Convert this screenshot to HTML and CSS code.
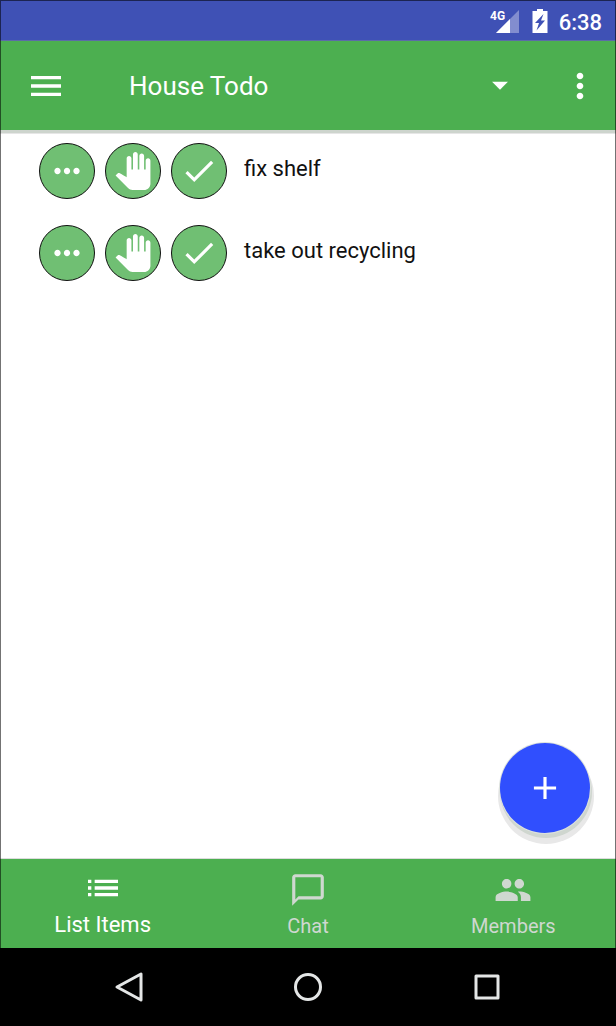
FILE: index.html
```html
<!DOCTYPE html>
<html lang="en">
<head>
<meta charset="utf-8">
<meta name="viewport" content="width=device-width, initial-scale=1">
<title>House Todo</title>
<link rel="stylesheet" href="styles.css">
</head>
<body>
<div class="device">
  <div class="status-bar">
    <svg class="status-signal" viewBox="0 0 30 24" role="img" aria-label="4G signal">
      <text class="signal-label" x="0" y="11">4G</text>
      <path d="M6 24 29 1v23z" fill="#fff" opacity=".35"/>
      <path d="M6 24 20 10v14z" fill="#fff"/>
    </svg>
    <svg class="status-battery" viewBox="0 0 16 24" role="img" aria-label="Battery charging">
      <path fill="#fff" fill-rule="evenodd" d="M5 0h6v2h4.500v22H.500V2H5zM11.500 5 3 14h4L4.500 21.500 13 11.500H9z"/>
    </svg>
    <span class="status-time">6:38</span>
  </div>

  <header class="app-bar">
    <button class="bar-button" type="button" aria-label="Open menu">
      <svg class="icon icon-large" viewBox="0 0 24 24"><path d="M3 18h18v-2H3v2zm0-5h18v-2H3v2zm0-7v2h18V6H3z"/></svg>
    </button>
    <div class="list-picker">
      <select class="list-select" aria-label="List">
        <option>House Todo</option>
      </select>
      <svg class="icon list-arrow" viewBox="0 0 24 24"><path d="m7 10 5 5 5-5z"/></svg>
    </div>
    <button class="bar-button" type="button" aria-label="More options">
      <svg class="icon icon-large" viewBox="0 0 24 24"><path d="M12 8c1.100 0 2-.9 2-2s-.9-2-2-2-2 .9-2 2 .9 2 2 2zm0 2c-1.100 0-2 .9-2 2s.9 2 2 2 2-.9 2-2-.9-2-2-2zm0 6c-1.100 0-2 .9-2 2s.9 2 2 2 2-.9 2-2-.9-2-2-2z"/></svg>
    </button>
  </header>

  <main class="content">
    <ul class="todo-list">
      <li class="todo">
        <div class="todo-actions">
          <button class="round-button" type="button" aria-label="Details of fix shelf">
            <svg class="icon" viewBox="0 0 24 24"><path d="M6 10c-1.100 0-2 .9-2 2s.9 2 2 2 2-.9 2-2-.9-2-2-2zm12 0c-1.100 0-2 .9-2 2s.9 2 2 2 2-.9 2-2-.9-2-2-2zm-6 0c-1.100 0-2 .9-2 2s.9 2 2 2 2-.9 2-2-.9-2-2-2z"/></svg>
          </button>
          <button class="round-button" type="button" aria-label="Claim fix shelf">
            <svg class="icon" viewBox="0 0 24 24"><path d="M23 5.500V20c0 2.200-1.800 4-4 4h-7.300c-1.080 0-2.100-.43-2.850-1.190L1 14.830s1.260-1.230 1.300-1.250c.22-.19.49-.29.79-.29.22 0 .42.06.6.16.04.01 4.310 2.460 4.310 2.460V4c0-.83.67-1.500 1.500-1.500S11 3.170 11 4v7h1V1.500c0-.83.67-1.500 1.500-1.500S15 .67 15 1.500V11h1V2.500c0-.83.67-1.500 1.500-1.500s1.500.67 1.500 1.500V11h1V5.500c0-.83.67-1.500 1.500-1.500s1.500.67 1.500 1.500z"/></svg>
          </button>
          <button class="round-button" type="button" aria-label="Complete fix shelf">
            <svg class="icon" viewBox="0 0 24 24"><path d="M9 16.170 4.830 12l-1.420 1.410L9 19 21 7l-1.410-1.410z"/></svg>
          </button>
        </div>
        <span class="todo-text">fix shelf</span>
      </li>
      <li class="todo">
        <div class="todo-actions">
          <button class="round-button" type="button" aria-label="Details of take out recycling">
            <svg class="icon" viewBox="0 0 24 24"><path d="M6 10c-1.100 0-2 .9-2 2s.9 2 2 2 2-.9 2-2-.9-2-2-2zm12 0c-1.100 0-2 .9-2 2s.9 2 2 2 2-.9 2-2-.9-2-2-2zm-6 0c-1.100 0-2 .9-2 2s.9 2 2 2 2-.9 2-2-.9-2-2-2z"/></svg>
          </button>
          <button class="round-button" type="button" aria-label="Claim take out recycling">
            <svg class="icon" viewBox="0 0 24 24"><path d="M23 5.500V20c0 2.200-1.800 4-4 4h-7.300c-1.080 0-2.100-.43-2.850-1.190L1 14.830s1.260-1.230 1.300-1.250c.22-.19.49-.29.79-.29.22 0 .42.06.6.16.04.01 4.310 2.460 4.310 2.460V4c0-.83.67-1.500 1.500-1.500S11 3.170 11 4v7h1V1.500c0-.83.67-1.500 1.500-1.500S15 .67 15 1.500V11h1V2.500c0-.83.67-1.500 1.500-1.500s1.500.67 1.500 1.500V11h1V5.500c0-.83.67-1.500 1.500-1.500s1.500.67 1.500 1.500z"/></svg>
          </button>
          <button class="round-button" type="button" aria-label="Complete take out recycling">
            <svg class="icon" viewBox="0 0 24 24"><path d="M9 16.170 4.830 12l-1.420 1.410L9 19 21 7l-1.410-1.410z"/></svg>
          </button>
        </div>
        <span class="todo-text">take out recycling</span>
      </li>
    </ul>
    <button class="fab" type="button" aria-label="Add item">
      <svg class="icon" viewBox="0 0 24 24"><path d="M19 13h-6v6h-2v-6H5v-2h6V5h2v6h6v2z"/></svg>
    </button>
  </main>

  <nav class="tabs" aria-label="Sections">
    <a class="tab tab-active" href="#items" aria-current="page">
      <svg class="icon icon-large" viewBox="0 0 24 24"><path d="M3 13h2v-2H3v2zm0 4h2v-2H3v2zm0-8h2V7H3v2zm4 4h14v-2H7v2zm0 4h14v-2H7v2zM7 7v2h14V7H7z"/></svg>
      <span>List Items</span>
    </a>
    <a class="tab" href="#chat">
      <svg class="icon" viewBox="0 0 24 24"><path d="M20 2H4c-1.100 0-2 .9-2 2v18l4-4h14c1.100 0 2-.9 2-2V4c0-1.100-.9-2-2-2zm0 14H6l-2 2V4h16v12z"/></svg>
      <span>Chat</span>
    </a>
    <a class="tab" href="#members">
      <svg class="icon" viewBox="0 0 24 24"><path d="M16 11c1.660 0 2.990-1.340 2.990-3S17.660 5 16 5c-1.660 0-3 1.340-3 3s1.340 3 3 3zm-8 0c1.660 0 2.990-1.340 2.990-3S9.660 5 8 5C6.340 5 5 6.340 5 8s1.340 3 3 3zm0 2c-2.330 0-7 1.170-7 3.500V19h14v-2.500c0-2.330-4.670-3.500-7-3.500zm8 0c-.29 0-.62.02-.97.05 1.160.84 1.970 1.970 1.970 3.450V19h6v-2.500c0-2.330-4.670-3.500-7-3.500z"/></svg>
      <span>Members</span>
    </a>
  </nav>

  <div class="system-nav">
    <button class="system-button" type="button" aria-label="Back">
      <svg class="system-icon" viewBox="0 0 32 32"><path d="M28 3v26L4 16z"/></svg>
    </button>
    <button class="system-button" type="button" aria-label="Home">
      <svg class="system-icon" viewBox="0 0 32 32"><circle cx="16" cy="16" r="12.500"/></svg>
    </button>
    <button class="system-button" type="button" aria-label="Recent apps">
      <svg class="system-icon" viewBox="0 0 32 32"><rect x="5" y="5" width="22" height="22"/></svg>
    </button>
  </div>
</div>
</body>
</html>
```

FILE: styles.css
```css
* {
  box-sizing: border-box;
}

body {
  margin: 0;
  font-family: Roboto, "Noto Sans", sans-serif;
  color: #111;
}

button {
  padding: 0;
  border: 0;
  background: none;
  color: inherit;
  font: inherit;
  cursor: pointer;
}

.device {
  position: relative;
  display: flex;
  flex-direction: column;
  min-height: 100vh;
  background: #fff;
}

/* Thin frame drawn over every bar */
.device::after {
  content: "";
  position: absolute;
  inset: 0;
  border: 1px solid rgba(0, 0, 0, 0.55);
  border-bottom: 0;
  pointer-events: none;
}

.icon {
  display: block;
  width: 38px;
  height: 38px;
  fill: currentColor;
}

.icon-large {
  width: 40px;
  height: 40px;
}

/* Status bar */
.status-bar {
  display: flex;
  align-items: center;
  justify-content: flex-end;
  height: 41px;
  padding: 2px 14px 0 0;
  border-bottom: 1px solid #5c6ba8;
  background: #3f51b5;
  color: #fff;
}

.status-signal {
  width: 30px;
  height: 24px;
  margin-right: 12px;
}

.signal-label {
  font-size: 12px;
  font-weight: 700;
  fill: #fff;
}

.status-battery {
  width: 16px;
  height: 24px;
  margin-right: 11px;
}

.status-time {
  padding-top: 3px;
  font-size: 22px;
  font-weight: 500;
  line-height: 24px;
}

/* App bar */
.app-bar {
  display: flex;
  align-items: center;
  height: 89px;
  padding: 0 16px 0 26px;
  background: #4caf50;
  box-shadow: 0 3px 0 #cdd4cd, 0 4px 0 #e6e6e6;
  color: #fff;
}

.bar-button {
  flex: none;
}

.list-picker {
  position: relative;
  flex: 1;
  margin: 0 41px 0 63px;
}

.list-select {
  display: block;
  width: 100%;
  height: 48px;
  margin: 0;
  padding: 0 40px 0 0;
  border: 0;
  appearance: none;
  background: none;
  color: inherit;
  font: 400 26px/48px Roboto, "Noto Sans", sans-serif;
}

.list-select option {
  color: #111;
}

.list-arrow {
  position: absolute;
  top: 4px;
  right: 0;
  pointer-events: none;
}

/* List */
.content {
  position: relative;
  flex: 1;
  padding: 13px 26px 120px 39px;
}

.todo-list {
  display: flex;
  flex-direction: column;
  gap: 26px;
  margin: 0;
  padding: 0;
  list-style: none;
}

.todo {
  display: flex;
  gap: 17px;
}

.todo-actions {
  display: flex;
  flex: none;
  gap: 10px;
}

.round-button {
  display: flex;
  align-items: center;
  justify-content: center;
  width: 56px;
  height: 56px;
  border: 1px solid #111;
  border-radius: 50%;
  background: #70bf73;
  color: #fff;
}

.todo-text {
  padding-top: 12px;
  font-size: 22px;
  line-height: 28px;
}

.fab {
  position: absolute;
  right: 26px;
  bottom: 25px;
  display: flex;
  align-items: center;
  justify-content: center;
  width: 90px;
  height: 90px;
  border-radius: 50%;
  background: #304ffe;
  box-shadow: 0 0 0 1px #dde2dd, 1px 4px 0 1px #cfd6cf, 1px 8px 0 3px #e8e8e8;
  color: #fff;
}

/* Bottom tabs */
.tabs {
  display: grid;
  grid-template-columns: repeat(3, 1fr);
  height: 90px;
  border-top: 1px solid #dcdcdc;
  background: #4caf50;
}

.tab {
  display: flex;
  flex-direction: column;
  align-items: center;
  padding-top: 12px;
  color: #cfd8d0;
  font-size: 20px;
  line-height: 34px;
  text-decoration: none;
}

.tab-active {
  padding-top: 9px;
  color: #fff;
  font-size: 22px;
}

/* System navigation */
.system-nav {
  display: flex;
  align-items: center;
  justify-content: center;
  height: 78px;
  background: #000;
}

.system-button {
  display: flex;
  align-items: center;
  justify-content: center;
  width: 179px;
  height: 78px;
}

.system-icon {
  width: 32px;
  height: 32px;
  fill: none;
  stroke: #e4e6e6;
  stroke-width: 3;
  stroke-linejoin: round;
}
```
